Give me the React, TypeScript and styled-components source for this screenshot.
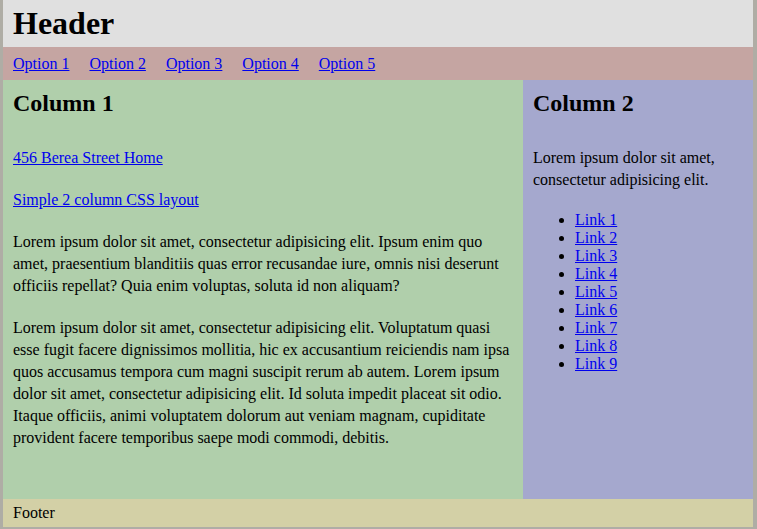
import styled, { createGlobalStyle } from 'styled-components';

const GlobalStyle = createGlobalStyle`
  html, body {
    margin: 0;
    padding: 0;
    background: #afada5;
    font-family: "Liberation Serif", "Times New Roman", serif;
    font-size: 16px;
    color: #000;
  }
  a {
    color: #0000ee;
  }
`;

const options = ['Option 1', 'Option 2', 'Option 3', 'Option 4', 'Option 5'];
const links = Array.from({ length: 9 }, (_, i) => `Link ${i + 1}`);

function App() {
  return (
    <>
      <GlobalStyle />
      <Wrap>
        <Header>
          <h1>Header</h1>
        </Header>
        <Nav>
          {options.map((opt) => (
            <a key={opt} href="#">
              {opt}
            </a>
          ))}
        </Nav>
        <Main>
          <Column $bg="#b0cfab" $width="520px">
            <h2>Column 1</h2>
            <p>
              <a href="#">456 Berea Street Home</a>
            </p>
            <p>
              <a href="#">Simple 2 column CSS layout</a>
            </p>
            <p>
              Lorem ipsum dolor sit amet, consectetur adipisicing elit. Ipsum enim quo
              amet, praesentium blanditiis quas error recusandae iure, omnis nisi deserunt
              officiis repellat? Quia enim voluptas, soluta id non aliquam?
            </p>
            <p>
              Lorem ipsum dolor sit amet, consectetur adipisicing elit. Voluptatum quasi
              esse fugit facere dignissimos mollitia, hic ex accusantium reiciendis nam ipsa
              quos accusamus tempora cum magni suscipit rerum ab autem. Lorem ipsum
              dolor sit amet, consectetur adipisicing elit. Id soluta impedit placeat sit odio.
              Itaque officiis, animi voluptatem dolorum aut veniam magnam, cupiditate
              provident facere temporibus saepe modi commodi, debitis.
            </p>
          </Column>
          <Column $bg="#a5a8ce" $width="230px">
            <h2>Column 2</h2>
            <p>Lorem ipsum dolor sit amet, consectetur adipisicing elit.</p>
            <LinkList>
              {links.map((l) => (
                <li key={l}>
                  <a href="#">{l}</a>
                </li>
              ))}
            </LinkList>
          </Column>
        </Main>
        <Footer>Footer</Footer>
      </Wrap>
    </>
  );
}

export default App;

const Wrap = styled.div`
  width: 750px;
  margin: 0 0 0 3px;
`;

const Header = styled.div`
  background: #e0e0e0;
  padding: 5px 10px;
  h1 {
    margin: 0;
    font-size: 32px;
    line-height: 37px;
  }
`;

const Nav = styled.div`
  background: #c5a5a2;
  padding: 8px 10px 7px;
  display: flex;
  gap: 20px;
  line-height: 18px;
`;

const Main = styled.div`
  display: flex;
  align-items: stretch;
`;

const Column = styled.div<{ $bg: string; $width: string }>`
  background: ${(p) => p.$bg};
  width: ${(p) => p.$width};
  box-sizing: border-box;
  padding: 10px 10px 30px;
  h2 {
    margin: 0 0 30px;
    font-size: 24px;
    line-height: 27px;
  }
  p {
    margin: 0 0 20px;
    line-height: 22px;
  }
`;

const LinkList = styled.ul`
  margin: 0;
  padding-left: 42px;
  line-height: 18px;
`;

const Footer = styled.div`
  background: #d3d0a6;
  padding: 5px 10px;
  line-height: 18px;
`;
